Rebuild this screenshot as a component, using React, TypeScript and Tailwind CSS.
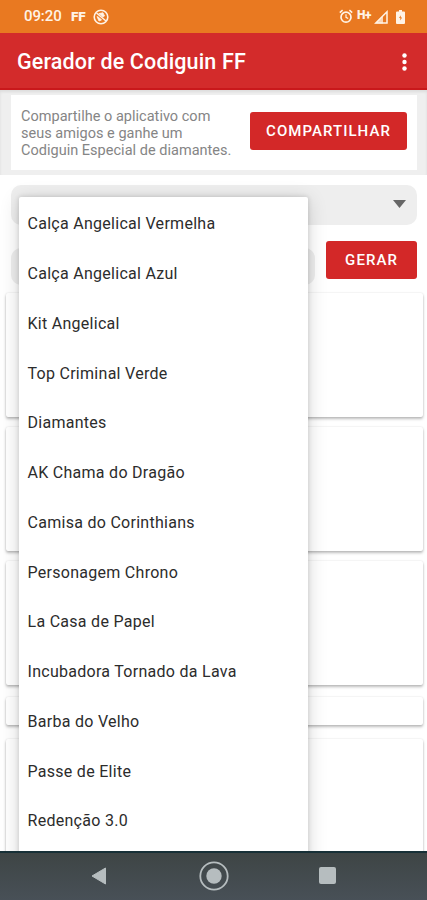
import React, { useState } from 'react';

const items: string[] = [
  'Calça Angelical Vermelha',
  'Calça Angelical Azul',
  'Kit Angelical',
  'Top Criminal Verde',
  'Diamantes',
  'AK Chama do Dragão',
  'Camisa do Corinthians',
  'Personagem Chrono',
  'La Casa de Papel',
  'Incubadora Tornado da Lava',
  'Barba do Velho',
  'Passe de Elite',
  'Redenção 3.0',
];

const StatusBar: React.FC = () => (
  <div className="flex h-[33px] items-center bg-[#e97921] pl-[24px] pr-[22px] text-[#fff3e6]">
    <span className="w-[47px] text-[15px] font-medium tracking-[-0.1px]">09:20</span>
    <span className="w-[22px] text-[13.5px] font-black leading-none tracking-[-0.2px]">FF</span>
    <svg width="16" height="16" viewBox="0 0 16 16" fill="none" stroke="currentColor">
      <circle cx="8" cy="8" r="6.8" strokeWidth="1.6" />
      <path d="M3.5 4l9.5 8" strokeWidth="1.4" />
      <path d="M5.8 4.6l4.200-.8 1.500 3.200-1.500 1z" fill="currentColor" strokeWidth=".8" />
      <path d="M4 7.500l2 1 2.500 2.500-2.500 1z" fill="currentColor" strokeWidth=".8" />
    </svg>
    <svg width="14" height="15" viewBox="0 0 14 15" fill="none" stroke="currentColor" className="ml-auto">
      <circle cx="7" cy="8.2" r="5" strokeWidth="1.7" />
      <path d="M.8 3.6L3.6 1.2M13.2 3.6l-2.8-2.4" strokeWidth="1.6" />
      <path d="M7 5.3v3l2.2 1.3" strokeWidth="1.2" />
    </svg>
    <span className="ml-[4px] w-[17px] -translate-y-[2px] text-[12px] font-black leading-none tracking-[-0.4px]">H+</span>
    <svg width="14" height="14" viewBox="0 0 14 14">
      <path d="M1.8 13L13 1.8V13z" fill="none" stroke="currentColor" strokeWidth="1.500" />
      <path d="M1 13.5L9 5.5v8z" fill="currentColor" opacity=".75" />
    </svg>
    <svg width="9" height="14" viewBox="0 0 9 14" className="ml-[8px]">
      <path d="M3 0h3v1.5h2q1 0 1 1V13q0 1-1 1H1q-1 0-1-1V2.500q0-1 1-1h2z" fill="currentColor" />
      <path d="M4.800 5.200L3 8h1.300v2.500L6.100 7.600H4.800z" fill="#e97921" />
    </svg>
  </div>
);

const Header: React.FC = () => (
  <div className="flex h-[57px] items-center justify-between border-b-2 border-[#c9181b] bg-[#d32b2b] pl-[17px] pr-[20px] text-white">
    <h1 className="mt-[4px] text-[21.5px] font-medium tracking-[0.15px]">Gerador de Codiguin FF</h1>
    <svg width="5" height="18" viewBox="0 0 5 18" fill="currentColor" className="mt-[2px]">
      <circle cx="2.500" cy="2.500" r="2.200" />
      <circle cx="2.500" cy="9" r="2.200" />
      <circle cx="2.500" cy="15.500" r="2.200" />
    </svg>
  </div>
);

const NavBar: React.FC = () => (
  <div className="relative z-20 h-[49px] border-t-2 border-[#173037] bg-linear-to-b from-[#3e4545] to-[#485057] text-[#b6bdbf]">
    <div className="flex h-[45px] items-center">
      <svg width="16" height="18" viewBox="0 0 16 18" className="ml-[91px]">
        <path d="M1 9L14.500 1v16z" fill="currentColor" stroke="currentColor" strokeLinejoin="round" />
      </svg>
      <svg width="30" height="30" viewBox="0 0 30 30" className="ml-[92px]">
        <circle cx="15" cy="15" r="13.700" fill="none" stroke="currentColor" strokeWidth="1.800" />
        <circle cx="15" cy="15" r="7.700" fill="currentColor" />
      </svg>
      <div className="ml-[90px] size-[17px] rounded-[2px] bg-[#b6bdbf]" />
    </div>
  </div>
);

const cardClass = 'shrink-0 rounded-[2px] bg-white shadow-[0_2px_3px_rgba(0,0,0,0.26),0_0_2px_rgba(0,0,0,0.12)]';

const App: React.FC = () => {
  const [selected, setSelected] = useState<string>('');
  const [open, setOpen] = useState<boolean>(true);

  const handleSelect = (item: string) => {
    setSelected(item);
    setOpen(false);
  };

  return (
    <div className="flex h-[900px] w-[427px] flex-col overflow-hidden bg-white font-['Roboto',sans-serif]">
      <StatusBar />
      <Header />

      <div className="relative h-[761px] overflow-hidden">
        <div className="h-[85px] bg-[#efefef] pl-[11px] pr-[10px] pt-[5px] shadow-[inset_0_2px_3px_rgba(0,0,0,0.08)]">
          <div className="flex h-[75px] items-center justify-between bg-white pl-[10px] pr-[10px]">
            <p className="mt-[2px] whitespace-nowrap text-[14.500px] leading-[17px] tracking-[0.020px] text-[#858585]">
              Compartilhe o aplicativo com<br />
              seus amigos e ganhe um<br />
              Codiguin Especial de diamantes.
            </p>
            <button className="mt-[-3px] h-[38px] w-[157px] rounded-[3px] bg-[#d32828] pt-px text-[15px] font-medium tracking-[1.050px] text-white">
              COMPARTILHAR
            </button>
          </div>
        </div>

        <div className="pl-[11px] pr-[10px] pt-[10px]">
          <button
            onClick={() => setOpen(!open)}
            className="flex h-[40px] w-full items-center justify-between rounded-[10px] bg-[#eeeeee] pl-4 pr-[11px] text-left text-base"
          >
            <span>{selected}</span>
            <svg width="13" height="8" viewBox="0 0 13 8" className="mt-[-3px]">
              <path d="M0 0h13L6.500 8z" fill="#666" />
            </svg>
          </button>
          <div className="mt-[16px] flex h-[38px] justify-between">
            <div className="mt-[7px] h-[37px] w-[304px] rounded-[10px] bg-[#eeeeee]" />
            <button className="h-[38px] w-[91px] rounded-[3px] bg-[#d32828] pt-px text-[15px] font-medium tracking-[1.050px] text-white">
              GERAR
            </button>
          </div>
        </div>

        <div className="mt-[14px] flex flex-col gap-[10px] pl-[6px] pr-[4px]">
          <div className={`${cardClass} h-[124px]`} />
          <div className={`${cardClass} h-[124px]`} />
          <div className={`${cardClass} h-[124px]`} />
          <div className={`${cardClass} mt-[2px] h-[28px]`} />
          <div className={`${cardClass} mt-[4px] h-[140px]`} />
        </div>

        {open && (
          <ul className="absolute left-[19px] top-[107px] h-[680px] w-[289px] rounded-[2px] bg-white pt-[2px] shadow-[0_3px_20px_rgba(0,0,0,0.16),0_0_5px_rgba(0,0,0,0.16)]">
            {items.map(item => (
              <li
                key={item}
                onClick={() => handleSelect(item)}
                className="flex h-[49.750px] items-center pl-[8.500px] pt-px text-[16px] tracking-[0.280px] text-[#2c2c2c]"
              >
                {item}
              </li>
            ))}
          </ul>
        )}
      </div>

      <NavBar />
    </div>
  );
};

export default App;
